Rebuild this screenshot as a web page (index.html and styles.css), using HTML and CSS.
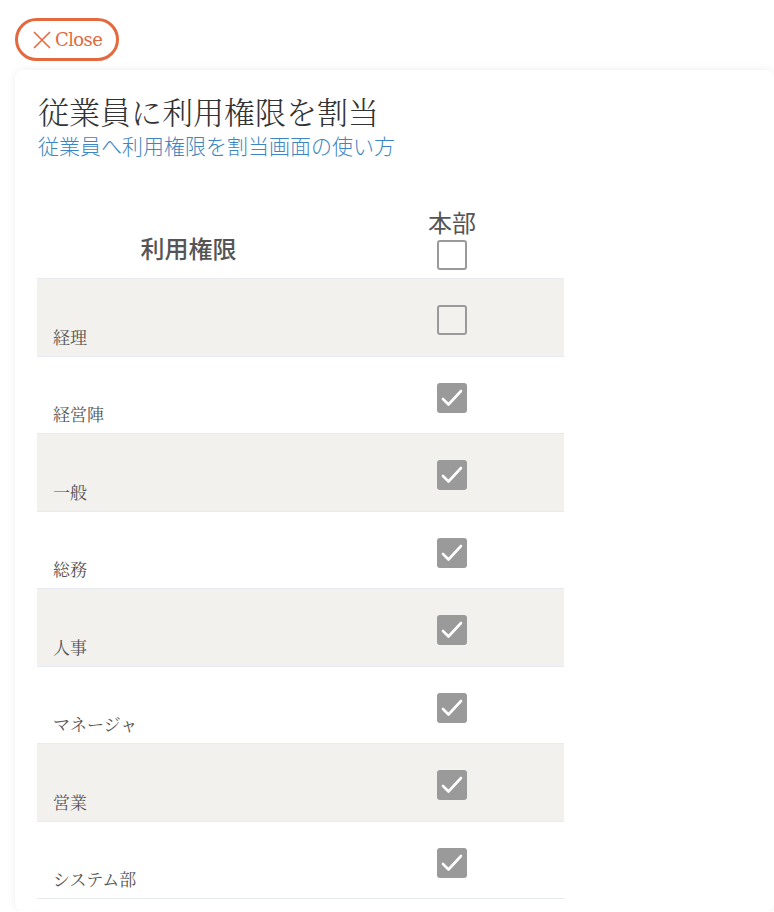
FILE: index.html
```html
<!DOCTYPE html>
<html lang="ja">
<head>
    <meta charset="UTF-8">
    <meta name="viewport" content="width=device-width, initial-scale=1.0">
    <title>従業員に利用権限を割当</title>
    <link rel="stylesheet" href="styles.css">
</head>
<body>
    <div class="top-bar">
        <button class="close-btn">
            <svg class="close-icon" width="18" height="18" viewBox="0 0 18 18">
                <path d="M1 1 L17 17 M17 1 L1 17" stroke="#e4693e" stroke-width="1.6" fill="none"/>
            </svg>
            Close
        </button>
    </div>

    <div class="panel">
        <h1 class="title">従業員に利用権限を割当</h1>
        <a class="help-link" href="#">従業員へ利用権限を割当画面の使い方</a>

        <table class="perm-table">
            <colgroup>
                <col class="c-name">
                <col class="c-dept">
            </colgroup>
            <thead>
                <tr>
                    <th class="col-name">利用権限</th>
                    <th class="col-dept">
                        <div class="dept-name">本部</div>
                        <span class="check"></span>
                    </th>
                </tr>
            </thead>
            <tbody>
                <tr><td class="col-name">経理</td><td class="col-dept"><span class="check"></span></td></tr>
                <tr><td class="col-name">経営陣</td><td class="col-dept"><span class="check checked"><svg viewBox="0 0 30 30"><path d="M6 16 L11.5 21.5 L24 8"/></svg></span></td></tr>
                <tr><td class="col-name">一般</td><td class="col-dept"><span class="check checked"><svg viewBox="0 0 30 30"><path d="M6 16 L11.5 21.5 L24 8"/></svg></span></td></tr>
                <tr><td class="col-name">総務</td><td class="col-dept"><span class="check checked"><svg viewBox="0 0 30 30"><path d="M6 16 L11.5 21.5 L24 8"/></svg></span></td></tr>
                <tr><td class="col-name">人事</td><td class="col-dept"><span class="check checked"><svg viewBox="0 0 30 30"><path d="M6 16 L11.5 21.5 L24 8"/></svg></span></td></tr>
                <tr><td class="col-name">マネージャ</td><td class="col-dept"><span class="check checked"><svg viewBox="0 0 30 30"><path d="M6 16 L11.5 21.5 L24 8"/></svg></span></td></tr>
                <tr><td class="col-name">営業</td><td class="col-dept"><span class="check checked"><svg viewBox="0 0 30 30"><path d="M6 16 L11.5 21.5 L24 8"/></svg></span></td></tr>
                <tr><td class="col-name">システム部</td><td class="col-dept"><span class="check checked"><svg viewBox="0 0 30 30"><path d="M6 16 L11.5 21.5 L24 8"/></svg></span></td></tr>
            </tbody>
        </table>
    </div>
</body>
</html>
```

FILE: styles.css
```css
body {
    margin: 0;
    padding: 0 0 0 15px;
    background-color: #fff;
    font-family: "Noto Serif CJK JP", "Noto Sans CJK JP", serif;
    color: #333;
}
.top-bar {
    padding-top: 18px;
    height: 70px;
    box-sizing: border-box;
}
.close-btn {
    display: flex;
    align-items: center;
    gap: 4px;
    height: 43px;
    width: 104px;
    padding: 0 0 0 15px;
    border: 3px solid #e4693e;
    border-radius: 22px;
    background: #fff;
    color: #e4693e;
    font-family: "Roboto Slab", "DejaVu Serif", serif;
    font-size: 18px;
    letter-spacing: -0.6px;
    box-sizing: border-box;
    cursor: pointer;
}
.close-icon {
    flex-shrink: 0;
}
.panel {
    background: #fff;
    border-radius: 8px;
    box-shadow: 0 0 8px rgba(0,0,0,0.07);
    padding: 20px 23px 12px 22px;
    box-sizing: border-box;
}
.title {
    margin: 0 0 0 1px;
    font-size: 31px;
    font-weight: 300;
    line-height: 42px;
    color: #333;
}
.help-link {
    display: block;
    margin-left: 1px;
    font-size: 21px;
    line-height: 26px;
    color: #3d86c2;
    text-decoration: none;
    font-family: "Noto Sans CJK JP", sans-serif;
    font-weight: 300;
}
.perm-table {
    margin-top: 52px;
    width: 527px;
    border-collapse: collapse;
    table-layout: fixed;
}
.c-name {
    width: 303px;
}
.c-dept {
    width: 224px;
}
.perm-table th {
    font-family: "Noto Sans CJK JP", sans-serif;
    color: #555;
    padding: 0;
    border-bottom: 1px solid #e8eaf2;
}
.perm-table th.col-name {
    font-size: 24px;
    font-weight: 500;
    padding-top: 6px;
    vertical-align: middle;
}
.perm-table th.col-dept {
    font-size: 24px;
    font-weight: 400;
    padding-bottom: 8px;
}
.dept-name {
    line-height: 24px;
    margin-bottom: 0;
}
.perm-table td {
    height: 77.5px;
    border-bottom: 1px solid #e8eaf2;
    padding: 0;
    box-sizing: border-box;
}
.perm-table td.col-name {
    vertical-align: bottom;
    padding: 0 0 8px 16px;
    font-size: 17px;
    color: #555;
    line-height: 22px;
}
.perm-table td.col-dept {
    text-align: center;
    vertical-align: middle;
    padding-top: 5px;
}
.perm-table tbody tr:nth-child(odd) {
    background-color: #f2f1ee;
}
.check {
    display: inline-block;
    width: 30px;
    height: 30px;
    border: 2.5px solid #9a9a9a;
    border-radius: 3px;
    box-sizing: border-box;
    vertical-align: middle;
}
.check.checked {
    background-color: #9a9a9a;
    border: none;
}
.check svg {
    display: block;
    width: 30px;
    height: 30px;
}
.check svg path {
    fill: none;
    stroke: #fff;
    stroke-width: 2.6;
    stroke-linecap: round;
    stroke-linejoin: round;
}
```
